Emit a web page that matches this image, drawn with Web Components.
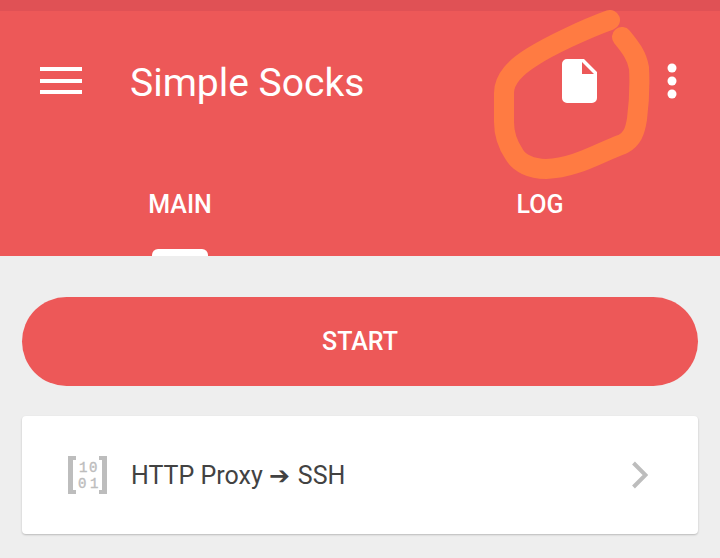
<!DOCTYPE html>
<html lang="en">
<head>
  <meta charset="utf-8">
  <meta name="viewport" content="width=device-width, initial-scale=1">
  <title>Simple Socks</title>
  <style>
    html {
      min-height: 100%;
      background: #eeeeee;
    }

    body {
      margin: 0;
      font-family: Roboto, "Liberation Sans", sans-serif;
      color: #424242;
      --accent: #ed5858;
      --accent-dark: #e05155;
      --muted: #bdbdbd;
    }

    main {
      display: flex;
      flex-direction: column;
      gap: 30px;
      padding: 41px 22px 24px;
    }
  </style>
</head>
<body>
  <app-header>
    <app-toolbar>Simple Socks</app-toolbar>
    <tab-bar>
      <tab-item selected>MAIN</tab-item>
      <tab-item>LOG</tab-item>
    </tab-bar>
  </app-header>
  <main>
    <start-button>START</start-button>
    <tunnel-card>
      <binary-icon slot="icon"></binary-icon>
      HTTP Proxy <arrow-glyph></arrow-glyph> SSH
    </tunnel-card>
  </main>

  <script>
    // Base class: clones the markup of the subclass into an open shadow root
    class BaseElement extends HTMLElement {
      constructor() {
        super();
        const template = document.createElement("template");
        template.innerHTML = this.constructor.markup;
        this.attachShadow({ mode: "open" }).appendChild(template.content.cloneNode(true));
      }
    }

    class AppHeader extends BaseElement {
      static markup = `
        <style>
          :host {
            display: block;
            background: var(--accent);
            color: #fff;
          }

          .status {
            height: 11px;
            background: var(--accent-dark);
          }
        </style>
        <div class="status"></div>
        <header><slot></slot></header>
      `;
    }

    class AppToolbar extends BaseElement {
      static markup = `
        <style>
          :host {
            display: flex;
            align-items: center;
            height: 139px;
            padding: 0 40px 0 32px;
          }

          button {
            display: flex;
            align-items: center;
            justify-content: center;
            padding: 0;
            border: 0;
            background: none;
            color: inherit;
            cursor: pointer;
          }

          svg {
            display: block;
            fill: currentColor;
          }

          .menu {
            width: 58px;
            height: 58px;
          }

          h1 {
            flex: 1;
            margin: 0 0 0 40px;
            padding-top: 4px;
            font-size: 39px;
            line-height: 48px;
            font-weight: 400;
          }

          .actions {
            position: relative;
            display: flex;
            align-items: center;
            gap: 54px;
          }

          .file {
            width: 60px;
            height: 60px;
          }

          .more {
            width: 16px;
            height: 60px;
          }

          /* hand-drawn ring round the file button */
          .ring {
            position: absolute;
            right: 9px;
            top: -50px;
            fill: none;
            stroke: #ff7b42;
            stroke-width: 20;
            stroke-linecap: round;
            stroke-linejoin: round;
            pointer-events: none;
          }
        </style>
        <button class="menu" type="button" aria-label="Menu">
          <svg width="42" height="28" viewBox="0 0 42 28">
            <path d="M0 0h42v4H0zM0 12h42v4H0zM0 23h42v4H0z"/>
          </svg>
        </button>
        <h1><slot></slot></h1>
        <div class="actions">
          <button class="file" type="button" aria-label="Config file">
            <svg width="36" height="44" viewBox="0 0 36 44">
              <path fill-rule="evenodd" d="M5 0H22L35 13V39a5 5 0 0 1-5 5H5a5 5 0 0 1-5-5V5a5 5 0 0 1 5-5zM20 3V15H32z"/>
            </svg>
          </button>
          <button class="more" type="button" aria-label="More options">
            <svg width="10" height="36" viewBox="0 0 10 36">
              <circle cx="5" cy="5" r="4.5"/>
              <circle cx="5" cy="18" r="4.5"/>
              <circle cx="5" cy="31" r="4.5"/>
            </svg>
          </button>
          <svg class="ring" width="180" height="190" viewBox="0 0 180 190" aria-hidden="true">
            <path d="M119 19C94 28 58 45 41 56C25 66 13 77 13 92V121C13 133 17 144 23 153C28 162 40 168 55 168C85 167 107 152 132 143C141 138 144 131 146 118C148 102 149 84 148 67C146 55 140 47 131 36"/>
          </svg>
        </div>
      `;
    }

    class TabBar extends BaseElement {
      static markup = `
        <style>
          :host {
            display: flex;
            height: 106px;
          }

          ::slotted(tab-item) {
            flex: 1;
          }
        </style>
        <slot></slot>
      `;

      connectedCallback() {
        this.setAttribute("role", "tablist");
      }
    }

    class TabItem extends BaseElement {
      static markup = `
        <style>
          :host {
            display: flex;
          }

          button {
            position: relative;
            flex: 1;
            padding: 4px 0 0;
            border: 0;
            background: none;
            color: inherit;
            font: 500 25px/32px Roboto, "Liberation Sans", sans-serif;
            cursor: pointer;
          }

          :host([selected]) button::after {
            content: "";
            position: absolute;
            bottom: 0;
            left: 50%;
            width: 56px;
            height: 7px;
            margin-left: -28px;
            border-radius: 6px 6px 0 0;
            background: #fff;
          }
        </style>
        <button type="button" role="tab"><slot></slot></button>
      `;

      connectedCallback() {
        const button = this.shadowRoot.querySelector("button");
        button.setAttribute("aria-selected", this.hasAttribute("selected"));
      }
    }

    class StartButton extends BaseElement {
      static markup = `
        <style>
          :host {
            display: block;
          }

          button {
            display: block;
            width: 100%;
            height: 89px;
            border: 0;
            border-radius: 45px;
            background: var(--accent);
            color: #fff;
            font: 500 25px/32px Roboto, "Liberation Sans", sans-serif;
            cursor: pointer;
          }
        </style>
        <button type="button"><slot></slot></button>
      `;
    }

    class TunnelCard extends BaseElement {
      static markup = `
        <style>
          :host {
            display: block;
          }

          button {
            display: flex;
            align-items: center;
            gap: 24px;
            width: 100%;
            height: 118px;
            padding: 0 50px 0 46px;
            border: 0;
            border-radius: 4px;
            background: #fff;
            box-shadow: 0 1px 2px rgba(0, 0, 0, 0.22);
            color: inherit;
            font: 400 25px/32px Roboto, "Liberation Sans", sans-serif;
            text-align: left;
            cursor: pointer;
          }

          .label {
            flex: 1;
            padding-top: 2px;
          }

          .chevron {
            fill: none;
            stroke: var(--muted);
            stroke-width: 4;
          }
        </style>
        <button type="button">
          <slot name="icon"></slot>
          <span class="label"><slot></slot></span>
          <svg class="chevron" width="16" height="28" viewBox="0 0 16 28">
            <path d="M1.5 2L13.5 14L1.5 26"/>
          </svg>
        </button>
      `;
    }

    class BinaryIcon extends BaseElement {
      static markup = `
        <style>
          :host {
            display: block;
          }

          svg {
            display: block;
            fill: var(--muted);
          }

          text {
            font: 14px "Liberation Mono", monospace;
            stroke: var(--muted);
            stroke-width: 0.4;
          }
        </style>
        <svg width="39" height="38" viewBox="0 0 39 38">
          <path d="M0 0H8V4H5V34H8V38H0zM39 0H31V4H34V34H31V38H39z"/>
          <text x="11 21" y="16">10</text>
          <text x="10 22" y="32">01</text>
        </svg>
      `;
    }

    class ArrowGlyph extends BaseElement {
      static markup = `
        <style>
          :host {
            font-family: "DejaVu Sans", sans-serif;
          }
        </style>
        <span>&#10132;</span>
      `;
    }

    customElements.define("app-header", AppHeader);
    customElements.define("app-toolbar", AppToolbar);
    customElements.define("tab-bar", TabBar);
    customElements.define("tab-item", TabItem);
    customElements.define("start-button", StartButton);
    customElements.define("tunnel-card", TunnelCard);
    customElements.define("binary-icon", BinaryIcon);
    customElements.define("arrow-glyph", ArrowGlyph);
  </script>
</body>
</html>
